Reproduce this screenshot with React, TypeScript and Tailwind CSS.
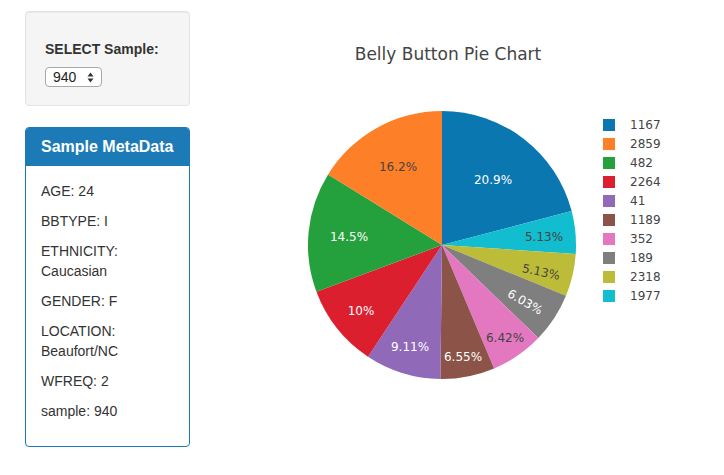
import React from "react";

const slices = [
  { id: "1167", v: 163, color: "#0a77b0", text: "#ffffff", label: "20.9%", lx: 493, ly: 180, rot: 0 },
  { id: "1977", v: 40, color: "#12bdcf", text: "#444444", label: "5.13%", lx: 544, ly: 237, rot: 0 },
  { id: "2318", v: 40, color: "#bdbc38", text: "#444444", label: "5.13%", lx: 541, ly: 272, rot: 12 },
  { id: "189", v: 47, color: "#7f7f7f", text: "#ffffff", label: "6.03%", lx: 525, ly: 302, rot: 30 },
  { id: "352", v: 50, color: "#e378c1", text: "#444444", label: "6.42%", lx: 505, ly: 338, rot: 0 },
  { id: "1189", v: 51, color: "#8c5449", text: "#ffffff", label: "6.55%", lx: 463, ly: 357, rot: 0 },
  { id: "41", v: 71, color: "#9169b9", text: "#ffffff", label: "9.11%", lx: 410, ly: 347, rot: 0 },
  { id: "2264", v: 78, color: "#dc1f2f", text: "#ffffff", label: "10%", lx: 361, ly: 311, rot: 0 },
  { id: "482", v: 113, color: "#24a03d", text: "#ffffff", label: "14.5%", lx: 349, ly: 237, rot: 0 },
  { id: "2859", v: 126, color: "#fd7f28", text: "#444444", label: "16.2%", lx: 398, ly: 167, rot: 0 },
];

const legendOrder = ["1167", "2859", "482", "2264", "41", "1189", "352", "189", "2318", "1977"];

const CX = 442;
const CY = 245;
const R = 134;

function pt(deg: number) {
  const a = (deg * Math.PI) / 180;
  return [CX + R * Math.sin(a), CY - R * Math.cos(a)];
}

function Pie() {
  const total = slices.reduce((s, x) => s + x.v, 0);
  let acc = 0;
  const paths = slices.map((s) => {
    const a0 = (acc / total) * 360;
    acc += s.v;
    const a1 = (acc / total) * 360;
    const [x0, y0] = pt(a0);
    const [x1, y1] = pt(a1);
    const large = a1 - a0 > 180 ? 1 : 0;
    return (
      <path
        key={s.id}
        d={`M${CX},${CY} L${x0},${y0} A${R},${R} 0 ${large} 1 ${x1},${y1} Z`}
        fill={s.color}
      />
    );
  });
  const font = '"DejaVu Sans", Verdana, sans-serif';
  return (
    <svg width={534} height={475} viewBox="190 0 534 475" className="block">
      <text
        x={448}
        y={60}
        textAnchor="middle"
        fontSize={17}
        fill="#444"
        style={{ fontFamily: font }}
      >
        Belly Button Pie Chart
      </text>
      {paths}
      {slices.map((s) => (
        <text
          key={s.id + "l"}
          x={s.lx}
          y={s.ly}
          textAnchor="middle"
          dominantBaseline="central"
          fontSize={12}
          fill={s.text}
          transform={s.rot ? `rotate(${s.rot} ${s.lx} ${s.ly})` : undefined}
          style={{ fontFamily: font }}
        >
          {s.label}
        </text>
      ))}
      {legendOrder.map((id, i) => {
        const s = slices.find((x) => x.id === id)!;
        const y = 125 + i * 19;
        return (
          <g key={id + "g"}>
            <rect x={603} y={y - 6} width={12} height={12} fill={s.color} />
            <text
              x={630}
              y={y}
              dominantBaseline="central"
              fontSize={12}
              fill="#444"
              style={{ fontFamily: font }}
            >
              {id}
            </text>
          </g>
        );
      })}
    </svg>
  );
}

function Arrows() {
  return (
    <svg width="7" height="11" viewBox="0 0 7 11">
      <path d="M3.5 0.5 L6.5 4.5 L0.5 4.5 Z" fill="#333" />
      <path d="M3.5 10.5 L6.5 6.5 L0.5 6.5 Z" fill="#333" />
    </svg>
  );
}

export default function App() {
  const meta: string[] = [
    "AGE: 24",
    "BBTYPE: I",
    "ETHNICITY: Caucasian",
    "GENDER: F",
    "LOCATION: Beaufort/NC",
    "WFREQ: 2",
    "sample: 940",
  ];
  return (
    <div
      className="w-[724px] h-[475px] bg-white flex overflow-hidden text-[#333]"
      style={{ fontFamily: '"Liberation Sans", Arial, sans-serif' }}
    >
      <div className="ml-[25px] w-[165px] flex flex-col shrink-0">
        <div className="mt-[11px] h-[95px] border border-[#e3e3e3] rounded bg-[#f5f5f5] shadow-[inset_0_1px_1px_rgba(0,0,0,0.05)] px-[19px] pt-[29px]">
          <div className="text-[14px] font-bold leading-[16px]">SELECT Sample:</div>
          <div className="mt-[10px] w-[57px] h-[20px] border border-[#a9a9a9] rounded-[4px] bg-white flex items-center justify-between pl-[7px] pr-[7px] text-[14px] text-[#222]">
            <span className="leading-none">940</span>
            <Arrows />
          </div>
        </div>
        <div className="mt-[21px] h-[320px] border border-[#1c7bb6] rounded flex flex-col">
          <div className="h-[38px] bg-[#1c7bb6] rounded-t-[3px] flex items-center px-[15px] text-white text-[16px] font-bold">
            Sample MetaData
          </div>
          <div className="px-[15px] pt-[15px] flex flex-col gap-[10px] text-[14px] leading-[20px]">
            {meta.map((m) => (
              <div key={m}>{m}</div>
            ))}
          </div>
        </div>
      </div>
      <Pie />
    </div>
  );
}
